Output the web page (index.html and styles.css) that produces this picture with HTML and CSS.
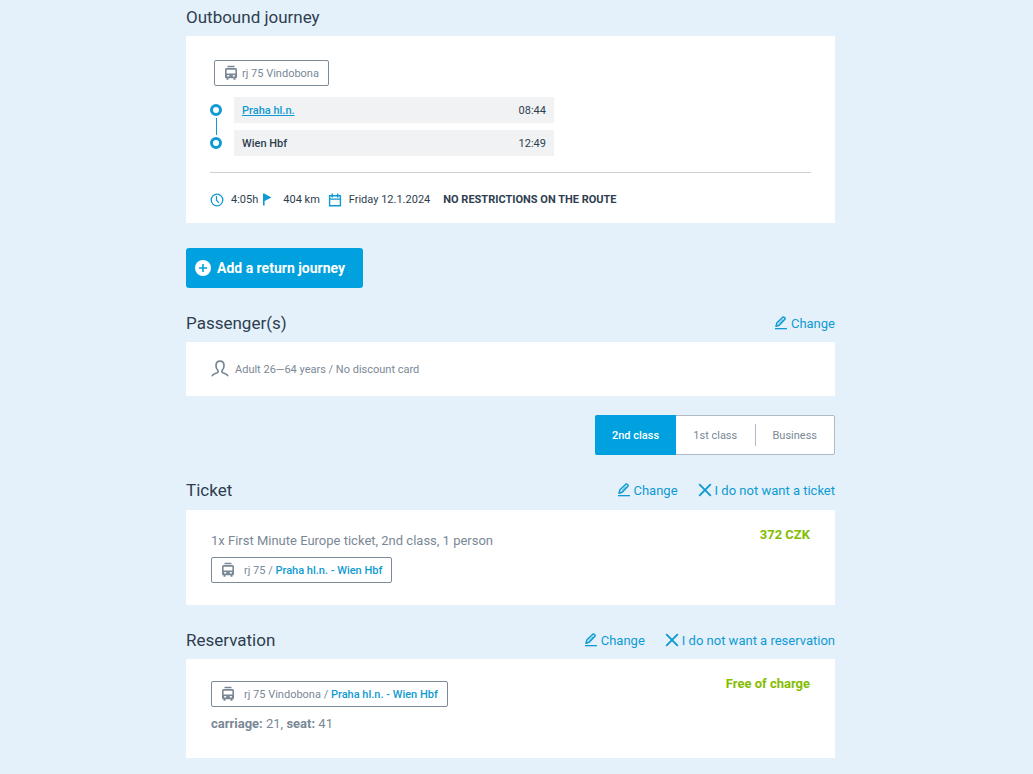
FILE: index.html
```html
<!DOCTYPE html>
<html lang="en">
<head>
  <meta charset="UTF-8">
  <meta name="viewport" content="width=device-width, initial-scale=1.0">
  <title>Your journey</title>
  <link rel="stylesheet" href="styles.css">
</head>
<body>
  <!-- Shared icons -->
  <svg class="sprite" aria-hidden="true">
    <symbol id="icon-train" viewBox="0 0 14 16">
      <path fill="currentColor" fill-rule="evenodd" d="M3.5 .8h7v1.5h-7zM2.5 3h9q1.5.2 1.5 1.8V12q0 1.2-1.2 1.2h-.3v1.6h-2v-1.6h-5v1.6h-2v-1.6h-.3Q1 13.2 1 12V4.8Q1 3.2 2.5 3zM2.6 4.8v3.8h8.8V4.8zM3.2 10v1.6h2V10zM8.8 10v1.6h2V10z"/>
    </symbol>
    <symbol id="icon-edit" viewBox="0 0 14 14">
      <path fill="none" stroke="currentColor" stroke-width="1.5" stroke-linejoin="round" d="M2 10.3l1-3.5L8.8 1.2q.6-.5 1.2 0l.9.8q.6.6 0 1.3L5.2 9.3z"/>
      <path fill="none" stroke="currentColor" stroke-width=".8" d="M4.6 7.9l4.6-4.5"/>
      <path fill="currentColor" d="M1 12h12v1.3H1z"/>
    </symbol>
    <symbol id="icon-cross" viewBox="0 0 14 14">
      <path fill="none" stroke="currentColor" stroke-width="1.9" d="M1.2 1.2l11.6 11.6M12.8 1.2L1.2 12.8"/>
    </symbol>
  </svg>

  <main class="container">
    <!-- Outbound journey -->
    <section>
      <div class="section-head">
        <h2>Outbound journey</h2>
      </div>
      <div class="card journey">
        <div class="train-tag journey-tag">
          <svg class="icon-train"><use href="#icon-train"/></svg>
          <span>rj 75 Vindobona</span>
        </div>
        <div class="route">
          <div class="route-line">
            <span class="dot"></span>
            <span class="line"></span>
            <span class="dot"></span>
          </div>
          <ul class="stops">
            <li><a href="#">Praha hl.n.</a><time>08:44</time></li>
            <li><span>Wien Hbf</span><time>12:49</time></li>
          </ul>
        </div>
        <div class="summary">
          <svg class="icon-info" viewBox="0 0 14 14">
            <circle cx="7" cy="7" r="5.8" fill="none" stroke="currentColor" stroke-width="1.3"/>
            <path fill="none" stroke="currentColor" stroke-width="1.2" d="M6.5 3v4.2l2.4 2.6"/>
          </svg>
          <span class="duration">4:05h</span>
          <svg class="icon-info" viewBox="0 0 14 14">
            <path fill="currentColor" d="M1 .5h1.6v12H1zM2.6 .8L9.5 4.4 2.6 8z"/>
          </svg>
          <span class="distance">404 km</span>
          <svg class="icon-info" viewBox="0 0 14 14">
            <path fill="none" stroke="currentColor" stroke-width="1.4" d="M1.6 2.7h10.8v10H1.6zM1.6 6.1h10.8M4.3.4v4M9.7.4v4"/>
          </svg>
          <span class="date">Friday 12.1.2024</span>
          <strong>NO RESTRICTIONS ON THE ROUTE</strong>
        </div>
      </div>
      <button type="button" class="add-btn">
        <svg viewBox="0 0 16 16">
          <circle cx="8" cy="8" r="8" fill="#fff"/>
          <path stroke="#00a1de" stroke-width="1.6" d="M8 4v8M4 8h8"/>
        </svg>
        Add a return journey
      </button>
    </section>

    <!-- Passengers -->
    <section>
      <div class="section-head">
        <h2>Passenger(s)</h2>
        <div class="actions">
          <a href="#"><svg><use href="#icon-edit"/></svg>Change</a>
        </div>
      </div>
      <div class="card passenger">
        <svg viewBox="0 0 18 18">
          <path fill="none" stroke="currentColor" stroke-width="1.7" d="M1 16.3q.6-1.8 2.7-2.6l2.5-1q1.5-.8.6-2.4Q4.8 8.3 5 5.2 5.2 1.2 9 1.2t4 4q.2 3.1-1.8 5.1-.9 1.6.6 2.4l2.5 1q2.1.8 2.7 2.6"/>
        </svg>
        <span>Adult 26—64 years / No discount card</span>
      </div>
    </section>

    <div class="classes">
      <button type="button" class="active">2nd class</button>
      <button type="button">1st class</button>
      <span class="divider"></span>
      <button type="button">Business</button>
    </div>

    <!-- Ticket -->
    <section>
      <div class="section-head">
        <h2>Ticket</h2>
        <div class="actions">
          <a href="#"><svg><use href="#icon-edit"/></svg>Change</a>
          <a href="#"><svg><use href="#icon-cross"/></svg>I do not want a ticket</a>
        </div>
      </div>
      <div class="card item">
        <div class="details">
          <p class="ticket-name">1x First Minute Europe ticket, 2nd class, 1 person</p>
          <div class="train-tag item-tag">
            <svg class="icon-train"><use href="#icon-train"/></svg>
            <span>rj 75 / <a href="#">Praha hl.n. - Wien Hbf</a></span>
          </div>
        </div>
        <div class="price">372 CZK</div>
      </div>
    </section>

    <!-- Reservation -->
    <section>
      <div class="section-head">
        <h2>Reservation</h2>
        <div class="actions">
          <a href="#"><svg><use href="#icon-edit"/></svg>Change</a>
          <a href="#"><svg><use href="#icon-cross"/></svg>I do not want a reservation</a>
        </div>
      </div>
      <div class="card item">
        <div class="details">
          <div class="train-tag item-tag">
            <svg class="icon-train"><use href="#icon-train"/></svg>
            <span>rj 75 Vindobona / <a href="#">Praha hl.n. - Wien Hbf</a></span>
          </div>
          <p class="seat"><strong>carriage:</strong> 21, <strong>seat:</strong> 41</p>
        </div>
        <div class="price">Free of charge</div>
      </div>
    </section>
  </main>
</body>
</html>
```

FILE: styles.css
```css
* {
  box-sizing: border-box;
}
body {
  font-family: Roboto, sans-serif;
  font-size: 11px;
  line-height: 17px;
  background-color: #e4f1fb;
  color: #2e3e4f;
  margin: 0;
  padding: 5px 24px 16px 12px;
}
h2, p, ul {
  margin: 0;
  padding: 0;
  font-weight: normal;
}
a {
  color: #0f9ad3;
  text-decoration: none;
}
button {
  font-family: inherit;
  border: none;
  cursor: pointer;
}
svg {
  flex-shrink: 0;
}
.sprite {
  display: none;
}
.container {
  width: 100%;
  max-width: 649px;
  margin: 0 auto;
}
.section-head {
  display: flex;
  align-items: center;
  justify-content: space-between;
  height: 24px;
  margin-bottom: 7px;
}
.section-head h2 {
  font-size: 17px;
  line-height: 24px;
}
.actions {
  display: flex;
  gap: 20px;
  font-size: 13px;
}
.actions a {
  display: flex;
  align-items: center;
  gap: 3px;
}
.actions svg {
  width: 14px;
  height: 14px;
}
.card {
  background-color: white;
  margin-bottom: 23px;
}

/* train label */
.train-tag {
  display: flex;
  align-items: center;
  width: fit-content;
  height: 26px;
  border: 1px solid #7c8b9a;
  border-radius: 2px;
  color: #7a8896;
}
.icon-train {
  width: 14px;
  height: 16px;
}
.journey-tag {
  gap: 4px;
  padding: 0 9px;
  margin-left: 4px;
}
.item-tag {
  gap: 9px;
  padding: 0 9px;
}
.item-tag a {
  font-weight: 500;
}

/* outbound journey */
.journey {
  padding: 24px 24px 15px;
  margin-bottom: 25px;
}
.route {
  display: flex;
  gap: 12px;
  padding: 11px 0 16px;
}
.route-line {
  display: flex;
  flex-direction: column;
  align-items: center;
  justify-content: center;
  gap: 2px;
  width: 12px;
}
.dot {
  width: 12px;
  height: 12px;
  border: 3px solid #0f9ad3;
  border-radius: 50%;
}
.line {
  width: 1px;
  height: 17px;
  background-color: #0f9ad3;
}
.stops {
  display: grid;
  gap: 7px;
  width: 320px;
  list-style: none;
}
.stops li {
  display: flex;
  align-items: center;
  justify-content: space-between;
  height: 26px;
  padding: 0 8px;
  background-color: #f1f2f4;
  font-weight: 500;
}
.stops a {
  text-decoration: underline;
}
.stops time {
  font-weight: normal;
}
.summary {
  display: flex;
  align-items: center;
  border-top: 1px solid #ccd1d6;
  padding-top: 18px;
}
.icon-info {
  width: 14px;
  height: 14px;
  margin-right: 7px;
  color: #0f9ad3;
}
.duration {
  margin-right: 4px;
}
.distance {
  margin-right: 8px;
}
.date {
  margin-right: 13px;
}
.add-btn {
  display: flex;
  align-items: center;
  gap: 6px;
  height: 40px;
  padding: 0 18px 0 9px;
  margin-bottom: 23px;
  border-radius: 3px;
  background-color: #00a1de;
  color: white;
  font-size: 14px;
  font-weight: bold;
}
.add-btn svg {
  width: 16px;
  height: 16px;
}

/* passengers */
.passenger {
  display: flex;
  align-items: center;
  gap: 6px;
  height: 54px;
  padding: 0 25px;
  margin-bottom: 19px;
  color: #7a8896;
}
.passenger svg {
  width: 18px;
  height: 18px;
}

/* class switch */
.classes {
  display: flex;
  align-items: center;
  width: 240px;
  height: 40px;
  margin: 0 0 23px auto;
  border: 1px solid #aebac4;
  border-radius: 2px;
  background-color: white;
}
.classes + section .section-head {
  margin-bottom: 8px;
}
.classes button {
  flex: 1;
  height: 40px;
  padding: 0;
  background: none;
  color: #7a8896;
  font-size: 11px;
}
.classes .active {
  flex: 0 0 81px;
  margin-left: -1px;
  border-radius: 2px 0 0 2px;
  background-color: #00a1de;
  color: white;
  font-weight: 500;
}
.divider {
  width: 1px;
  height: 22px;
  background-color: #aebac4;
}

/* ticket and reservation */
.item {
  display: flex;
  justify-content: space-between;
  padding: 22px 25px;
  color: #7a8896;
  font-size: 13px;
}
.item-tag {
  font-size: 11px;
}
.ticket-name {
  margin-bottom: 8px;
}
.seat {
  margin: 8px 0 4px;
}
.price {
  margin-top: -6px;
  color: #84bd00;
  font-weight: bold;
}
```
